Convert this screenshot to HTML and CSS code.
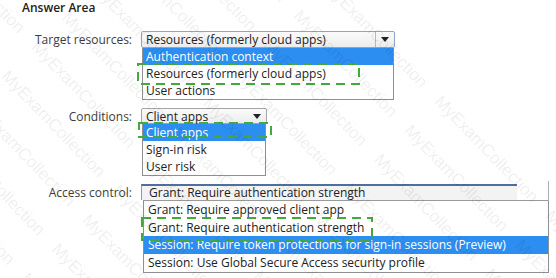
FILE: index.html
```html
<!DOCTYPE html>
<html lang="en">
<head>
  <meta charset="UTF-8">
  <title>Answer Area</title>
  <link rel="stylesheet" href="styles.css">
</head>
<body>
  <div class="page">
    <h2 class="title">Answer Area</h2>

    <div class="fields">
      <div class="field">
        <label>Target resources:</label>
        <div class="combo combo-target">
          <div class="select select-target">
            <span class="value">Resources (formerly cloud apps)</span>
            <span class="arrow split"></span>
          </div>
          <ul class="list">
            <li class="active">Authentication context</li>
            <li>Resources (formerly cloud apps)</li>
            <li>User actions</li>
          </ul>
          <svg class="mark mark-target" width="223" height="22"><rect x="1" y="1" width="221" height="20"/></svg>
        </div>
      </div>

      <div class="field">
        <label>Conditions:</label>
        <div class="combo combo-cond">
          <div class="select select-cond">
            <span class="value">Client apps</span>
            <span class="arrow"></span>
          </div>
          <ul class="list">
            <li class="active">Client apps</li>
            <li>Sign-in risk</li>
            <li>User risk</li>
          </ul>
          <svg class="mark mark-cond" width="134" height="16"><rect x="1" y="1" width="132" height="14"/></svg>
        </div>
      </div>

      <div class="field">
        <label>Access control:</label>
        <div class="combo combo-access">
          <div class="select select-access">
            <span class="value">Grant: Require authentication strength</span>
          </div>
          <ul class="list list-access">
            <li>Grant: Require approved client app</li>
            <li>Grant: Require authentication strength</li>
            <li class="active">Session: Require token protections for sign-in sessions (Preview)</li>
            <li>Session: Use Global Secure Access security profile</li>
          </ul>
          <svg class="mark mark-access" width="232" height="24"><rect x="1" y="1" width="230" height="22"/></svg>
        </div>
      </div>
    </div>

    <div class="watermark" aria-hidden="true">
      <div class="wm-inner">
        <p>MyExamCollection MyExamCollection MyExamCollection MyExamCollection MyExamCollection MyExamCollection</p>
        <p>MyExamCollection MyExamCollection MyExamCollection MyExamCollection MyExamCollection MyExamCollection</p>
        <p>MyExamCollection MyExamCollection MyExamCollection MyExamCollection MyExamCollection MyExamCollection</p>
        <p>MyExamCollection MyExamCollection MyExamCollection MyExamCollection MyExamCollection MyExamCollection</p>
        <p>MyExamCollection MyExamCollection MyExamCollection MyExamCollection MyExamCollection MyExamCollection</p>
        <p>MyExamCollection MyExamCollection MyExamCollection MyExamCollection MyExamCollection MyExamCollection</p>
        <p>MyExamCollection MyExamCollection MyExamCollection MyExamCollection MyExamCollection MyExamCollection</p>
        <p>MyExamCollection MyExamCollection MyExamCollection MyExamCollection MyExamCollection MyExamCollection</p>
        <p>MyExamCollection MyExamCollection MyExamCollection MyExamCollection MyExamCollection MyExamCollection</p>
        <p>MyExamCollection MyExamCollection MyExamCollection MyExamCollection MyExamCollection MyExamCollection</p>
        <p>MyExamCollection MyExamCollection MyExamCollection MyExamCollection MyExamCollection MyExamCollection</p>
        <p>MyExamCollection MyExamCollection MyExamCollection MyExamCollection MyExamCollection MyExamCollection</p>
        <p>MyExamCollection MyExamCollection MyExamCollection MyExamCollection MyExamCollection MyExamCollection</p>
        <p>MyExamCollection MyExamCollection MyExamCollection MyExamCollection MyExamCollection MyExamCollection</p>
      </div>
    </div>
  </div>
</body>
</html>
```

FILE: styles.css
```css
body {
  margin: 0;
  background: #fff;
  font-family: "Open Sans", "Noto Sans", sans-serif;
  font-size: 12px;
  color: #222;
}
.page {
  position: relative;
  width: 556px;
  height: 278px;
  overflow: hidden;
  padding: 1px 0 0 22px;
  box-sizing: border-box;
}
.title {
  margin: 0;
  font-size: 12px;
  font-weight: 600;
  line-height: 14px;
  color: #222;
}
.fields {
  margin-top: 16px;
}
.field {
  display: flex;
  align-items: flex-start;
  gap: 9px;
  margin-bottom: 8px;
}
.field label {
  width: 110px;
  text-align: right;
  line-height: 17px;
  color: #3c3c3c;
  white-space: nowrap;
}
.combo {
  position: relative;
}
.select {
  display: flex;
  align-items: center;
  height: 17px;
  box-sizing: border-box;
  border: 1px solid #a4a4a4;
  border-radius: 2px;
  background: linear-gradient(#fbfbfb, #ececec);
  padding-left: 4px;
  line-height: 15px;
}
.select .value {
  flex: 1;
  white-space: nowrap;
}
.arrow {
  width: 18px;
  height: 100%;
  display: flex;
  align-items: center;
  justify-content: center;
}
.arrow::after {
  content: "";
  border-left: 4px solid transparent;
  border-right: 4px solid transparent;
  border-top: 5px solid #222;
}
.arrow.split {
  border-left: 1px solid #b8b8b8;
}
.select-target {
  width: 254px;
  border-color: #8ea4c8;
}
.select-cond {
  width: 126px;
  height: 16px;
}
.select-access {
  width: 376px;
  height: 16px;
  border: none;
  border-top: 2px solid #4f6f9f;
  border-left: 1px solid #8c9cb4;
  border-radius: 0;
  background: #f3f3f3;
  padding-left: 7px;
  line-height: 14px;
}
.list {
  list-style: none;
  margin: 0 1px;
  padding: 0;
  border: 1px solid #8f8f8f;
  border-top: none;
  background: #fff;
}
.list li {
  height: 17px;
  line-height: 17px;
  padding-left: 3px;
  white-space: nowrap;
}
.list li.active {
  background: #2b8ef0;
  color: #fff;
}
.list-access {
  width: 404px;
  margin: 0 0 0 2px;
  border-top: 1px solid #9a9a9a;
  position: relative;
}
.list-access::before {
  content: "";
  position: absolute;
  right: -1px;
  top: -20px;
  height: 20px;
  border-right: 1px solid #b0b0b0;
}
.list-access li {
  height: 17.7px;
  line-height: 17.7px;
  padding-left: 4px;
}
.mark {
  position: absolute;
  overflow: visible;
}
.mark rect {
  fill: none;
  stroke: #45a83d;
  stroke-width: 2;
  stroke-dasharray: 9 6;
}
.mark-target {
  left: -4px;
  top: 32px;
}
.mark-cond {
  left: -3px;
  top: 14px;
}
.mark-access {
  left: 0;
  top: 33px;
}
.watermark {
  position: absolute;
  inset: 0;
  overflow: hidden;
  pointer-events: none;
}
.wm-inner {
  position: absolute;
  left: -160px;
  top: -420px;
  width: 1100px;
  transform: rotate(46deg);
  transform-origin: 0 0;
  left: 120px;
  top: -260px;
}
.wm-inner p {
  margin: 0;
  font-family: "Liberation Sans", sans-serif;
  font-size: 17px;
  line-height: 42px;
  white-space: nowrap;
  word-spacing: 14px;
  color: rgba(0, 0, 0, 0.08);
}
```
